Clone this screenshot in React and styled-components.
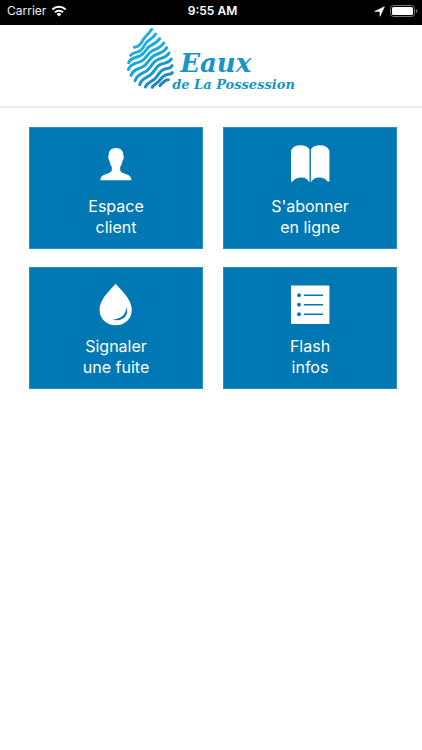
import React from "react";
import styled, { createGlobalStyle } from "styled-components";

const GlobalStyle = createGlobalStyle`
  * { box-sizing: border-box; }
  body {
    margin: 0;
    background: #ffffff;
    font-family: Inter, "Liberation Sans", sans-serif;
  }
`;

const StatusBar = styled.div`
  display: grid;
  grid-template-columns: 1fr auto 1fr;
  align-items: center;
  height: 25px;
  padding: 0 4px 3px 7px;
  background: #000000;
  color: #f2f2f2;
  font-size: 12px;
  line-height: 16px;
`;

const StatusGroup = styled.div`
  display: flex;
  align-items: center;
  justify-content: ${(p) => (p.$end ? "flex-end" : "flex-start")};
  gap: 5px;
`;

const Clock = styled.time`
  font-weight: 600;
  color: #ffffff;
`;

const Header = styled.header`
  display: flex;
  justify-content: center;
  height: 83px;
  border-bottom: 2px solid #ebebeb;
`;

const Brand = styled.h1`
  display: flex;
  margin: 0;
  padding-top: 2px;
  color: #1795c9;
  font-family: "DejaVu Serif", serif;
  font-style: italic;
  font-weight: 700;
`;

const BrandText = styled.span`
  display: flex;
  flex-direction: column;
  margin-left: -3px;
  padding-top: 22px;
`;

const BrandName = styled.span`
  padding-left: 8px;
  font-size: 26px;
  line-height: 28px;
`;

const BrandPlace = styled.span`
  font-size: 13px;
  line-height: 16px;
  white-space: nowrap;
`;

const Menu = styled.nav`
  display: grid;
  grid-template-columns: 1fr 1fr;
  gap: 18px 20px;
  padding: 19px 25px 19px 29px;
`;

const Tile = styled.a`
  display: flex;
  flex-direction: column;
  align-items: center;
  gap: 7px;
  height: 122px;
  padding-top: 13px;
  border: 1px solid #2590c6;
  background: #0078b4;
  color: #ffffff;
  text-decoration: none;
`;

const Label = styled.span`
  font-size: 16px;
  font-weight: 400;
  line-height: 21px;
  text-align: center;
  white-space: pre-line;
`;

const WaveDrop = () => (
  <svg width="48" height="64" viewBox="22 9 144 192" aria-hidden="true">
    <defs>
      <linearGradient id="wave" gradientUnits="userSpaceOnUse" x1="40" y1="20" x2="150" y2="195">
        <stop offset="0" stopColor="#22b8e0" />
        <stop offset="0.55" stopColor="#1aa3d0" />
        <stop offset="1" stopColor="#1c76b4" />
      </linearGradient>
    </defs>
    <g fill="none" stroke="url(#wave)" strokeWidth="9" strokeLinecap="round">
      <path d="M44 70C57 69 63 62 69 50C75 37 86 33 96 16" />
      <path d="M33 94C40 84 51 87 62 80C75 71 74 58 85 51C95 44 101 41 108 30" />
      <path d="M27 116C34 99 48 103 62 95C79 86 78 73 91 66C104 59 112 56 120 44" />
      <path d="M26 136C36 115 50 120 66 111C83 100 84 88 97 81C111 74 123 71 132 57" />
      <path d="M34 154C43 132 57 137 73 126C88 114 90 102 103 95C118 87 132 86 141 71" />
      <path d="M46 170C55 147 69 151 83 139C97 127 98 115 112 108C127 101 139 102 148 87" />
      <path d="M60 182C67 161 81 163 94 151C107 139 108 128 121 122C136 115 147 119 155 105" />
      <path d="M77 189C82 175 95 175 107 163C118 151 119 142 131 137C144 131 150 137 157 125" />
      <path d="M98 190C101 182 110 180 118 171C128 159 131 154 141 152C149 150 153 152 158 146" />
      <path d="M121 185C125 177 129 178 134 172C138 168 141 167 146 167" />
    </g>
  </svg>
);

const WifiGlyph = () => (
  <svg width="16" height="12" viewBox="0 0 16 12" aria-label="Wi-Fi">
    <path fill="none" stroke="#fff" strokeWidth="2" d="M1.4 4.5A9.4 9.4 0 0 1 14.6 4.5M4 7.3A5.7 5.7 0 0 1 12 7.3" />
    <path fill="#fff" d="M8 11.6L5.6 9.1A3.5 3.5 0 0 1 10.4 9.1Z" />
  </svg>
);

const LocationGlyph = () => (
  <svg width="11" height="11" viewBox="0 0 10 10" aria-label="Location">
    <path fill="#fff" stroke="#fff" strokeWidth=".5" strokeLinejoin="round" d="M9.5.6L5.4 9.4V4.9H.6Z" />
  </svg>
);

const BatteryGlyph = () => (
  <svg width="28" height="12" viewBox="0 0 28 12" aria-label="Battery">
    <rect x=".5" y=".5" width="24" height="11" rx="3" fill="none" stroke="#777" />
    <rect x="2" y="2" width="21" height="8" rx="1.5" fill="#fff" />
    <path fill="#777" d="M26 4A2.2 2.2 0 0 1 26 8Z" />
  </svg>
);

const TileIcon = ({ children }) => (
  <svg width="48" height="48" viewBox="0 0 48 48" fill="#fff" aria-hidden="true">
    {children}
  </svg>
);

const Person = () => (
  <TileIcon>
    <path d="M24 7C28.8 7 31.5 9.8 31.3 14.2C32.2 15 31.8 18.6 30.6 19.4C30.2 22 29.4 24.3 28.2 25.8V29.6C29.4 33.5 39.5 32.3 39.5 39.2H8.3C8.3 32.3 18.6 33.5 19.8 29.6V25.8C18.6 24.3 17.8 22 17.4 19.4C16.2 18.6 15.8 15 16.7 14.2C16.5 9.8 19.2 7 24 7Z" />
  </TileIcon>
);

const Book = () => (
  <TileIcon>
    <path d="M5 9.5C6.5 6 10 4.3 14.2 4.3C18.5 4.3 22 5.7 23.5 8.2V41.5C22 38.3 19 36.4 15.5 36.4C11.5 36.4 8.5 37.8 6.8 40.5H5Z" />
    <path d="M43.4 9.5C41.9 6 38.4 4.3 34.2 4.3C29.9 4.3 26.4 5.7 24.9 8.2V41.5C26.4 38.3 29.4 36.4 32.9 36.4C36.9 36.4 39.9 37.8 41.6 40.5H43.4Z" />
  </TileIcon>
);

const Drop = () => (
  <TileIcon>
    <path d="M23.7 2.8C27.5 7.7 39.8 17.5 39.8 29C39.8 38 32.7 44.3 23.7 44.3C14.7 44.3 7.6 38 7.6 29C7.6 17.5 19.9 7.7 23.7 2.8Z" />
    <path fill="#0078b4" d="M34.6 26.2C37.2 33.8 31.5 41.2 20.3 38.6C28.6 38.2 33.8 33.8 34.6 26.2Z" />
  </TileIcon>
);

const List = () => (
  <TileIcon>
    <path d="M5 4.5H43.4V42.9H5Z" />
    <g fill="#0078b4">
      <circle cx="13" cy="14.2" r="1.9" />
      <circle cx="13" cy="23.7" r="1.9" />
      <circle cx="13" cy="33.2" r="1.9" />
      <path d="M17.8 13.4H37V15H17.8ZM17.8 22.9H37V24.5H17.8ZM17.8 32.4H37V34H17.8Z" />
    </g>
  </TileIcon>
);

const items = [
  { id: "client", label: "Espace\nclient", Icon: Person },
  { id: "abonnement", label: "S'abonner\nen ligne", Icon: Book },
  { id: "fuite", label: "Signaler\nune fuite", Icon: Drop },
  { id: "infos", label: "Flash\ninfos", Icon: List },
];

export default function App() {
  return (
    <>
      <GlobalStyle />
      <StatusBar>
        <StatusGroup>
          <span>Carrier</span>
          <WifiGlyph />
        </StatusGroup>
        <Clock>9:55 AM</Clock>
        <StatusGroup $end>
          <LocationGlyph />
          <BatteryGlyph />
        </StatusGroup>
      </StatusBar>
      <Header>
        <Brand>
          <WaveDrop />
          <BrandText>
            <BrandName>Eaux</BrandName>
            <BrandPlace>de La Possession</BrandPlace>
          </BrandText>
        </Brand>
      </Header>
      <Menu>
        {items.map(({ id, label, Icon }) => (
          <Tile key={id} href={`#${id}`}>
            <Icon />
            <Label>{label}</Label>
          </Tile>
        ))}
      </Menu>
    </>
  );
}
